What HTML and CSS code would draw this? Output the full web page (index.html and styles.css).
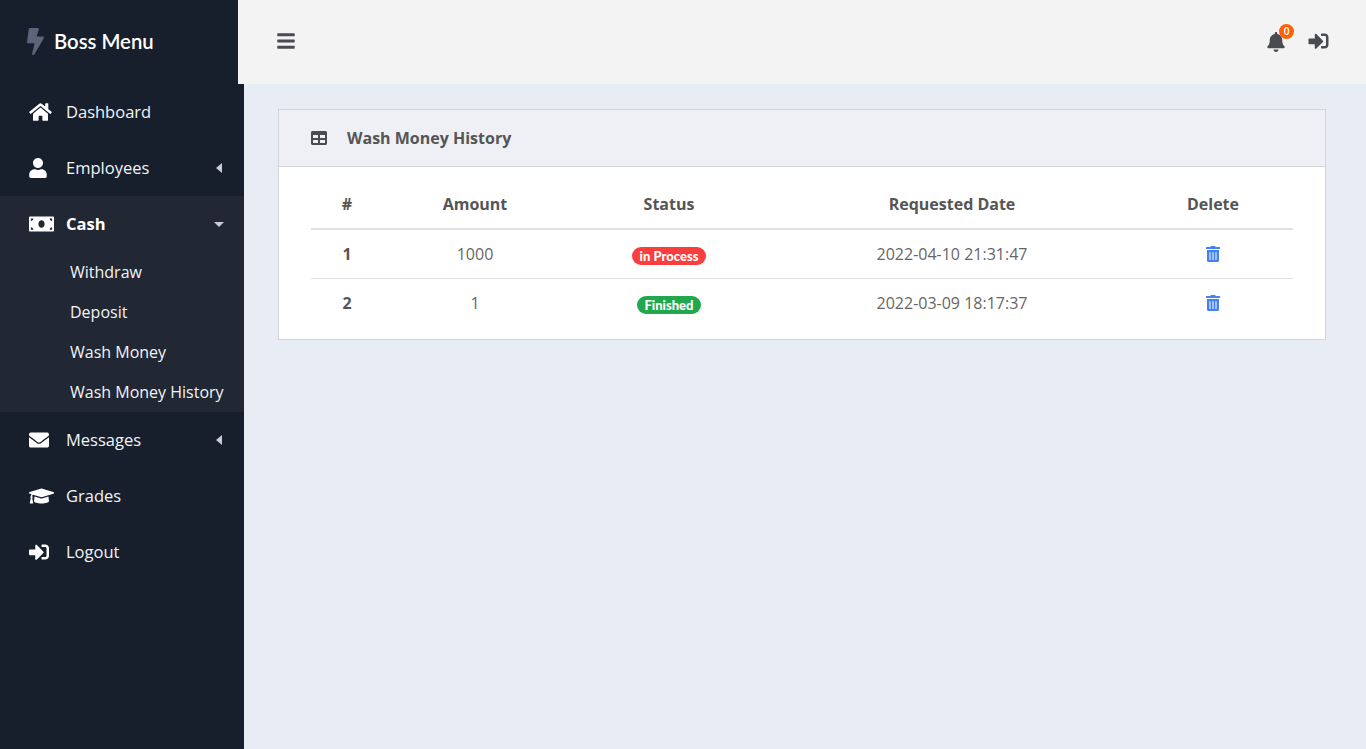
FILE: index.html
```html
<!DOCTYPE html>
<html lang="en">
<head>
<meta charset="utf-8">
<title>Wash Money History</title>
<link rel="stylesheet" href="styles.css">
</head>
<body>
<aside class="sidebar">
  <div class="brand">
    <svg class="brand-icon" viewBox="0 0 320 512"><path d="M296 160H180.6l42.6-129.8C227.2 15 215.7 0 200 0H56C44 0 33.8 8.9 32.2 20.8l-32 240C-1.7 275.2 9.5 288 24 288h118.7L96.6 482.5c-3.6 15.2 8 29.5 23.3 29.5 8.4 0 16.4-4.4 20.8-12l176-304c9.3-15.9-2.2-36-20.7-36z"/></svg>
    <span class="brand-name">Boss Menu</span>
  </div>
  <nav class="nav">
    <a class="nav-item"><span class="nav-icon"><svg class="i-home" viewBox="0 0 576 512"><path d="M280.37 148.26L96 300.11V464a16 16 0 0 0 16 16l112.06-.29a16 16 0 0 0 15.92-16V368a16 16 0 0 1 16-16h64a16 16 0 0 1 16 16v95.64a16 16 0 0 0 16 16.05L464 480a16 16 0 0 0 16-16V300L295.67 148.26a12.19 12.19 0 0 0-15.3 0zM571.6 251.47L488 182.56V44.05a12 12 0 0 0-12-12h-56a12 12 0 0 0-12 12v72.61L318.47 43a48 48 0 0 0-61 0L4.34 251.47a12 12 0 0 0-1.6 16.9l25.5 31A12 12 0 0 0 45.15 301l235.22-193.74a12.19 12.19 0 0 1 15.3 0L530.9 301a12 12 0 0 0 16.9-1.6l25.5-31a12 12 0 0 0-1.7-16.93z"/></svg></span><span class="nav-label">Dashboard</span></a>
    <a class="nav-item"><span class="nav-icon"><svg class="i-user" viewBox="0 0 448 512"><path d="M224 256c70.7 0 128-57.3 128-128S294.7 0 224 0 96 57.3 96 128s57.3 128 128 128zm89.6 32h-16.7c-22.2 10.2-46.9 16-72.9 16s-50.6-5.8-72.9-16h-16.7C60.2 288 0 348.2 0 422.4V464c0 26.5 21.5 48 48 48h352c26.5 0 48-21.5 48-48v-41.6c0-74.2-60.2-134.4-134.4-134.4z"/></svg></span><span class="nav-label">Employees</span><span class="caret-left"></span></a>
    <div class="nav-group">
      <a class="nav-item"><span class="nav-icon"><svg class="i-money" viewBox="0 0 640 512"><path d="M608 64H32C14.33 64 0 78.33 0 96v320c0 17.67 14.33 32 32 32h576c17.67 0 32-14.33 32-32V96c0-17.67-14.33-32-32-32zM48 400v-64c35.35 0 64 28.65 64 64H48zm0-224v-64h64c0 35.35-28.65 64-64 64zm272 176c-44.19 0-80-42.99-80-96 0-53.02 35.82-96 80-96s80 42.98 80 96c0 53.03-35.83 96-80 96zm272 48h-64c0-35.35 28.65-64 64-64v64zm0-224c-35.35 0-64-28.65-64-64h64v64z"/></svg></span><span class="nav-label nav-label-active">Cash</span><span class="caret-down"></span></a>
      <a class="sub-item">Withdraw</a>
      <a class="sub-item">Deposit</a>
      <a class="sub-item">Wash Money</a>
      <a class="sub-item">Wash Money History</a>
    </div>
    <a class="nav-item"><span class="nav-icon"><svg class="i-mail" viewBox="0 0 512 512"><path d="M502.3 190.8c3.9-3.1 9.7-.2 9.7 4.7V400c0 26.5-21.5 48-48 48H48c-26.5 0-48-21.5-48-48V195.6c0-5 5.7-7.8 9.7-4.7 22.4 17.4 52.1 39.5 154.1 113.6 21.1 15.4 56.7 47.8 92.2 47.6 35.7.3 72-32.8 92.3-47.6 102-74.1 131.6-96.3 154-113.7zM256 320c23.2.4 56.6-29.2 73.4-41.4 132.7-96.3 142.8-104.7 173.4-128.7 5.8-4.5 9.2-11.5 9.2-18.9v-19c0-26.5-21.5-48-48-48H48C21.5 64 0 85.5 0 112v19c0 7.4 3.4 14.3 9.2 18.9 30.6 23.9 40.7 32.4 173.4 128.7 16.8 12.2 50.2 41.8 73.4 41.4z"/></svg></span><span class="nav-label">Messages</span><span class="caret-left"></span></a>
    <a class="nav-item"><span class="nav-icon"><svg class="i-cap" viewBox="0 0 640 512"><path d="M622.34 153.2L343.4 67.5c-15.2-4.67-31.6-4.67-46.79 0L17.66 153.2c-23.54 7.23-23.54 38.36 0 45.59l48.63 14.94c-10.67 13.19-17.23 29.28-17.88 46.9C38.78 266.15 32 276.11 32 288c0 10.78 5.68 19.85 13.86 25.65L20.33 428.53C18.11 438.52 25.71 448 35.94 448h56.11c10.24 0 17.84-9.48 15.62-19.47L82.14 313.65C90.32 307.85 96 298.78 96 288c0-11.57-6.47-21.25-15.66-26.87.76-15.02 8.44-28.3 20.69-36.72L296.6 284.5c9.06 2.78 26.44 6.25 46.79 0l278.95-85.7c23.55-7.24 23.55-38.36 0-45.6zM352.79 315.09c-28.53 8.76-52.84 3.92-65.59 0l-145.02-44.55L128 384c0 35.35 85.96 64 192 64s192-28.65 192-64l-14.18-113.47-145.03 44.56z"/></svg></span><span class="nav-label">Grades</span></a>
    <a class="nav-item"><span class="nav-icon"><svg class="i-mail" viewBox="0 0 512 512"><path d="M416 448h-84c-6.6 0-12-5.4-12-12v-40c0-6.6 5.4-12 12-12h84c17.7 0 32-14.3 32-32V160c0-17.7-14.3-32-32-32h-84c-6.6 0-12-5.4-12-12V76c0-6.6 5.4-12 12-12h84c53 0 96 43 96 96v192c0 53-43 96-96 96zm-47-201L201 79c-15-15-41-4.5-41 17v96H24c-13.3 0-24 10.7-24 24v96c0 13.3 10.7 24 24 24h136v96c0 21.5 26 32 41 17l168-168c9.3-9.4 9.3-24.6 0-34z"/></svg></span><span class="nav-label">Logout</span></a>
  </nav>
</aside>
<div class="main">
  <header class="topbar">
    <svg class="i-bars" viewBox="0 0 448 512"><path d="M16 132h416c8.837 0 16-7.163 16-16V76c0-8.837-7.163-16-16-16H16C7.163 60 0 67.163 0 76v40c0 8.837 7.163 16 16 16zm0 160h416c8.837 0 16-7.163 16-16v-40c0-8.837-7.163-16-16-16H16c-8.837 0-16 7.163-16 16v40c0 8.837 7.163 16 16 16zm0 160h416c8.837 0 16-7.163 16-16v-40c0-8.837-7.163-16-16-16H16c-8.837 0-16 7.163-16 16v40c0 8.837 7.163 16 16 16z"/></svg>
    <div class="top-actions">
      <span class="bell">
        <svg class="i-bell" viewBox="0 0 448 512"><path d="M224 512c35.32 0 63.97-28.65 63.97-64H160.03c0 35.35 28.65 64 63.97 64zm215.39-149.71c-19.32-20.76-55.47-51.99-55.47-154.29 0-77.7-54.48-139.9-127.94-155.16V32c0-17.67-14.32-32-31.98-32s-31.98 14.33-31.98 32v20.84C118.56 68.1 64.08 130.3 64.08 208c0 102.3-36.15 133.53-55.47 154.29-6 6.45-8.66 14.16-8.61 21.71.11 16.4 12.98 32 32.1 32h383.8c19.12 0 32-15.6 32.1-32 .05-7.55-2.61-15.27-8.61-21.71z"/></svg>
        <span class="bell-badge">0</span>
      </span>
      <svg class="i-signin" viewBox="0 0 512 512"><path d="M416 448h-84c-6.6 0-12-5.4-12-12v-40c0-6.6 5.4-12 12-12h84c17.7 0 32-14.3 32-32V160c0-17.7-14.3-32-32-32h-84c-6.6 0-12-5.4-12-12V76c0-6.6 5.4-12 12-12h84c53 0 96 43 96 96v192c0 53-43 96-96 96zm-47-201L201 79c-15-15-41-4.5-41 17v96H24c-13.3 0-24 10.7-24 24v96c0 13.3 10.7 24 24 24h136v96c0 21.5 26 32 41 17l168-168c9.3-9.4 9.3-24.6 0-34z"/></svg>
    </div>
  </header>
  <main class="content">
    <section class="card">
      <div class="card-head">
        <svg class="i-table" viewBox="0 0 512 512"><path d="M464 32H48C21.49 32 0 53.49 0 80v352c0 26.51 21.49 48 48 48h416c26.51 0 48-21.49 48-48V80c0-26.51-21.49-48-48-48zM224 416H64v-96h160v96zm0-160H64v-96h160v96zm224 160H288v-96h160v96zm0-160H288v-96h160v96z"/></svg>
        <h1 class="card-title">Wash Money History</h1>
      </div>
      <div class="card-body">
        <table class="history">
          <colgroup><col class="c1"><col class="c2"><col class="c3"><col class="c4"><col class="c5"></colgroup>
          <thead>
            <tr><th>#</th><th>Amount</th><th>Status</th><th>Requested Date</th><th>Delete</th></tr>
          </thead>
          <tbody>
            <tr>
              <th>1</th><td>1000</td><td><span class="badge badge-red">in Process</span></td><td>2022-04-10 21:31:47</td>
              <td><svg class="i-trash" viewBox="0 0 448 512"><path d="M32 464a48 48 0 0 0 48 48h288a48 48 0 0 0 48-48V128H32zm272-256a16 16 0 0 1 32 0v224a16 16 0 0 1-32 0zm-96 0a16 16 0 0 1 32 0v224a16 16 0 0 1-32 0zm-96 0a16 16 0 0 1 32 0v224a16 16 0 0 1-32 0zM432 32H312l-9.4-18.7A24 24 0 0 0 281.1 0H166.8a23.72 23.72 0 0 0-21.4 13.3L136 32H16A16 16 0 0 0 0 48v32a16 16 0 0 0 16 16h416a16 16 0 0 0 16-16V48a16 16 0 0 0-16-16z"/></svg></td>
            </tr>
            <tr>
              <th>2</th><td>1</td><td><span class="badge badge-green">Finished</span></td><td>2022-03-09 18:17:37</td>
              <td><svg class="i-trash" viewBox="0 0 448 512"><path d="M32 464a48 48 0 0 0 48 48h288a48 48 0 0 0 48-48V128H32zm272-256a16 16 0 0 1 32 0v224a16 16 0 0 1-32 0zm-96 0a16 16 0 0 1 32 0v224a16 16 0 0 1-32 0zm-96 0a16 16 0 0 1 32 0v224a16 16 0 0 1-32 0zM432 32H312l-9.4-18.7A24 24 0 0 0 281.1 0H166.8a23.72 23.72 0 0 0-21.4 13.3L136 32H16A16 16 0 0 0 0 48v32a16 16 0 0 0 16 16h416a16 16 0 0 0 16-16V48a16 16 0 0 0-16-16z"/></svg></td>
            </tr>
          </tbody>
        </table>
      </div>
    </section>
  </main>
</div>
</body>
</html>
```
FILE: styles.css
```css
* { box-sizing: border-box; }
html, body { height: 100%; }
body {
  margin: 0;
  display: flex;
  height: 749px;
  overflow: hidden;
  background: #e8ecf4;
  font-family: "Open Sans", sans-serif;
  font-size: 16px;
  color: #555;
}
svg { display: block; fill: currentColor; }

.sidebar { width: 244px; flex: none; background: #171f2d; color: #fff; }
.brand { height: 84px; display: flex; align-items: center; padding: 0 0 2px 27px; }
.brand-icon { width: 17px; height: 27px; color: #5b6478; margin-right: 10px; }
.brand-name { font-family: "Lato", sans-serif; font-size: 20.3px; font-weight: 600; color: #fff; }

.nav { display: flex; flex-direction: column; }
.nav-item { height: 56px; display: flex; align-items: center; padding: 0 20px 0 29px; color: #fff; }
.nav-icon { width: 37px; flex: none; display: flex; }
.nav-label { flex: 1; padding-bottom: 2px; font-size: 16.5px; color: #f2f4f7; }
.nav-label-active { font-weight: 700; color: #fff; }
.nav-group { background: #212733; }
.sub-item { height: 40px; display: flex; align-items: center; padding-left: 70px; font-size: 16px; color: #f2f4f7; }

.i-home { width: 23px; height: 20px; }
.i-user { width: 18px; height: 20px; }
.i-money { width: 25px; height: 20px; }
.i-mail { width: 20px; height: 20px; }
.i-cap { width: 25px; height: 20px; }

.caret-left { width: 0; height: 0; border: 5px solid transparent; border-left-width: 0; border-right-width: 6px; border-right-color: #c8ccd4; margin-right: 2px; }
.caret-down { width: 0; height: 0; border: 5px solid transparent; border-bottom-width: 0; border-top-color: #c8ccd4; margin-top: 1px; }

.main { flex: 1; min-width: 0; display: flex; flex-direction: column; }
.topbar {
  position: relative;
  height: 84px;
  margin-left: -6px;
  background: #f3f3f3;
  display: flex;
  align-items: center;
  justify-content: space-between;
  padding: 0 37px 0 39px;
  color: #494b50;
}
.i-bars { width: 18px; height: 20px; margin-bottom: 2px; }
.top-actions { display: flex; align-items: center; gap: 23px; }
.bell { position: relative; display: block; }
.i-bell { width: 18px; height: 20px; }
.bell-badge {
  position: absolute;
  top: -8px;
  right: -9px;
  width: 15px;
  height: 15px;
  border-radius: 50%;
  background: #fd6104;
  color: #fff;
  font-size: 10px;
  font-weight: 600;
  line-height: 15px;
  text-align: center;
}
.i-signin { width: 21px; height: 20px; margin-bottom: 2px; }

.content { padding: 25px 40px 0 34px; }
.card { background: #fff; border: 1px solid #d2d4d9; }
.card-head {
  height: 57px;
  display: flex;
  align-items: center;
  padding-left: 32px;
  background: #eef0f5;
  border-bottom: 1px solid #d2d4d9;
}
.i-table { width: 16px; height: 16px; color: #494b50; margin-right: 20px; }
.card-title { margin: 0; font-size: 16px; font-weight: 700; color: #555; }
.card-body { padding: 13px 32px 12px; }

.history { width: 100%; border-collapse: collapse; table-layout: fixed; text-align: center; }
.c1 { width: 72px; }
.c2 { width: 184px; }
.c3 { width: 204px; }
.c4 { width: 362px; }
.c5 { width: 160px; }
.history th { font-weight: 700; color: #555; }
.history td { color: #666; }
.history thead th { height: 49px; border-bottom: 2px solid #dee2e6; }
.history tbody th, .history tbody td { height: 49px; border-top: 1px solid #dee2e6; }
.history tbody tr:first-child th, .history tbody tr:first-child td { border-top: 0; }

.badge {
  display: inline-block;
  margin-top: 2px;
  padding: 0 7.5px;
  border-radius: 10px;
  font-family: "Lato", sans-serif;
  font-size: 13px;
  font-weight: 900;
  line-height: 18px;
  color: #fff;
  vertical-align: middle;
}
.badge-red { background: #fa3e3e; }
.badge-green { background: #1fa84c; }
.i-trash { width: 14px; height: 16px; margin: 0 auto; color: #4482ee; }
```
